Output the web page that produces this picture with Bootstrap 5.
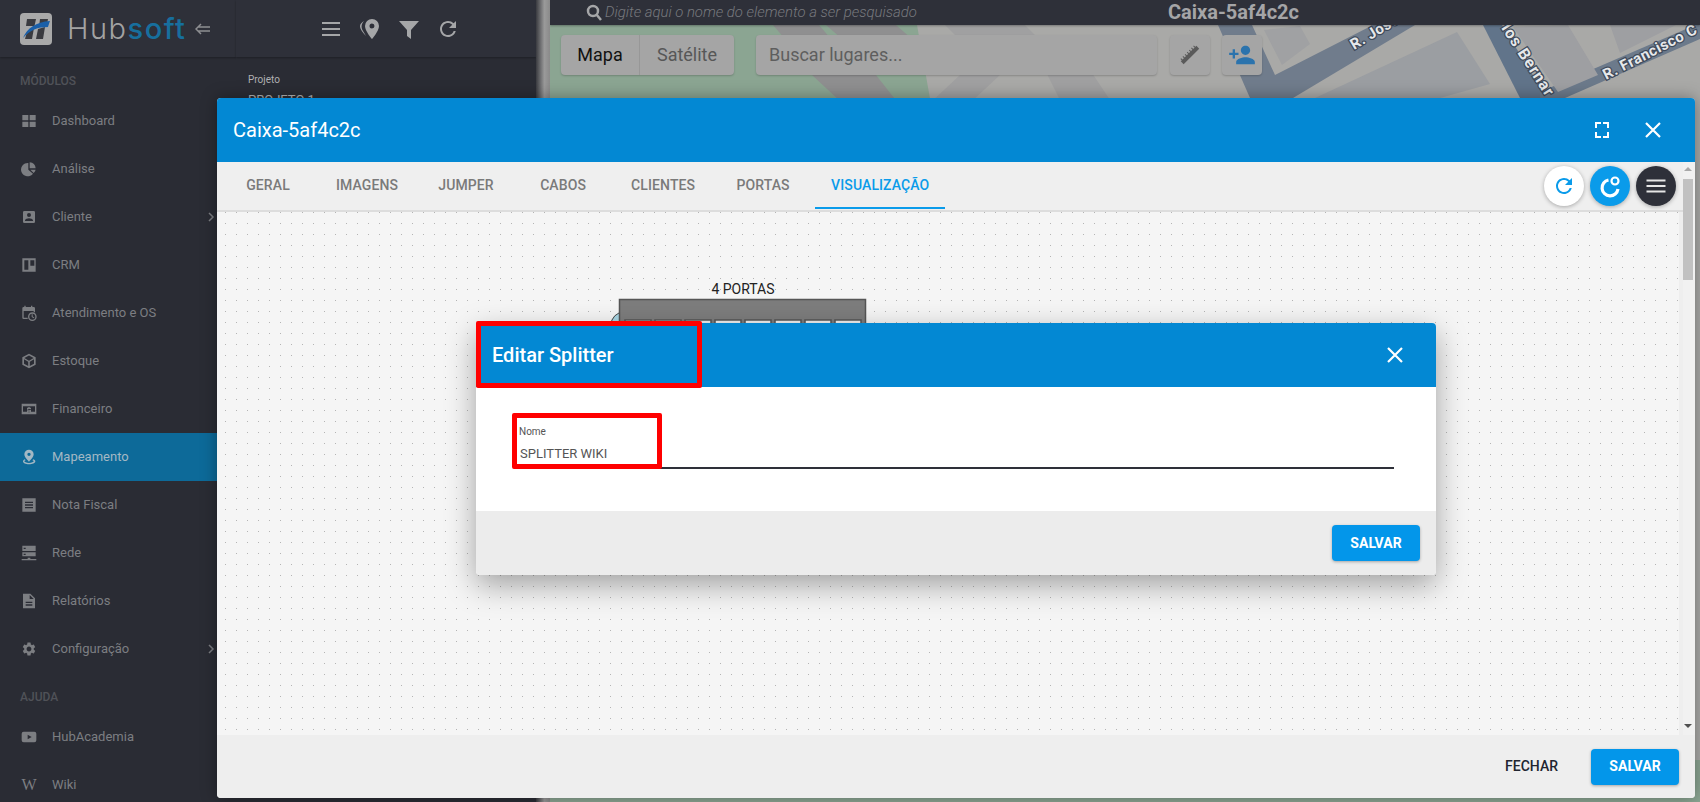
<!DOCTYPE html>
<html lang="pt-BR">

<head>
    <meta charset="UTF-8">
    <meta name="viewport" content="width=device-width, initial-scale=1.0">
    <title>Hubsoft - Mapeamento</title>
    <link href="https://cdn.jsdelivr.net/npm/bootstrap@5.3.0/dist/css/bootstrap.min.css" rel="stylesheet">
    <style>
        html, body { height: 100%; overflow: hidden; }
        body { font-family: Roboto, "Liberation Sans", sans-serif; background: #2a2c34; position: relative; }

        /* menu lateral */
        .side-menu { width: 236px; background: #2a2c34; flex: none; height: 802px; }
        .brand-bar { height: 57px; background: #2e3039; padding-left: 20px; box-shadow: 0 1px 2px rgba(0,0,0,.3); }
        .brand-name { font-family: Inter, sans-serif; font-weight: 300; font-size: 29px; letter-spacing: 1.5px; line-height: 1; color: #a3a3a3; margin-left: 15px; }
        .brand-name span { color: #176f9e; font-weight: 500; }
        .brand-back { margin-left: 9px; flex: none; }
        .menu-title { font-size: 12px; font-weight: 500; color: #505258; padding-left: 20px; height: 16px; line-height: 16px; }
        .menu-link { height: 48px; padding-left: 21px; font-size: 13px; color: #7c7e82; position: relative; }
        .menu-link svg { width: 16px; height: 16px; fill: #7c7e82; flex: none; margin-right: 15px; }
        .menu-link.is-on { background: #0d6a99; color: #a3b8c4; }
        .menu-link.is-on svg { fill: #a3b8c4; }
        .menu-link svg.menu-arrow { position: absolute; left: 207px; top: 19px; width: 8px; height: 10px; margin: 0; fill: none; }
        .wiki-mark { font-family: "Liberation Serif", serif; font-weight: 400; font-size: 16px; width: 16px; margin-right: 15px; text-align: center; color: #7c7e82; }

        /* painel do projeto */
        .project-panel { width: 300px; background: #2a2c34; flex: none; height: 802px; }
        .panel-bar { height: 57px; background: #2e3039; box-shadow: 0 1px 2px rgba(0,0,0,.3); padding-left: 83px; gap: 15px; }
        .panel-bar svg { width: 24px; height: 24px; fill: #a5a6a8; }
        .panel-label { font-size: 10px; color: #b0b1b3; padding: 16px 0 0 12px; line-height: 14px; }
        .panel-value { font-size: 13px; color: #b0b1b3; padding: 3px 0 0 12px; }

        /* mapa */
        .map-gutter { width: 14px; flex: none; height: 802px; background: linear-gradient(90deg, #3a3b40, #9a9a9a 60%, #8a8a8a); }
        .map-area { flex-grow: 1; height: 802px; position: relative; background: #a8a8a6; overflow: hidden; }
        .map-canvas { position: absolute; left: 0; top: 25px; }
        .map-bar { height: 25px; background: #2e3039; position: relative; padding-left: 36px; box-shadow: 0 1px 2px rgba(0,0,0,.3); }
        .map-search { width: 583px; font-size: 14.9px; font-style: italic; font-weight: 300; color: #77797e; }
        .map-search svg { width: 17px; height: 17px; margin-right: 2px; }
        .map-title { font-size: 20px; font-weight: 700; color: #a5a5a7; line-height: 25px; margin-left: -1px; }
        .map-tools { position: relative; padding: 10px 0 0 11px; }
        .map-switch, .map-find, .map-tool { background: #a5a5a5; height: 40px; border-radius: 4px; box-shadow: 0 1px 2px rgba(0,0,0,.2); }
        .map-switch { width: 173px; font-size: 18px; margin-right: 22px; }
        .map-switch div { line-height: 40px; text-align: center; }
        .map-switch .sw-a { width: 79px; color: #111; border-right: 1px solid #979797; }
        .map-switch .sw-b { flex-grow: 1; color: #575757; }
        .map-find { width: 401px; font-size: 18px; line-height: 40px; color: #5e5e5e; padding-left: 13px; margin-right: 13px; }
        .map-tool { width: 40px; margin-right: 12px; }
        .map-tool svg { width: 28px; height: 28px; }

        /* modal Caixa */
        .box-dialog { position: absolute; left: 217px; top: 98px; width: 1478px; height: 700px; background: #eee; border: 0; border-radius: 4px; box-shadow: 0 0 16px rgba(0,0,0,.35); overflow: hidden; }
        .blue-head { background: #0388d3; color: #fff; height: 64px; border: 0; border-radius: 0; padding: 0 16px; flex: none; }
        .blue-head h5 { font-size: 20px; font-weight: 400; margin: 0; }
        .box-dialog .blue-head { padding-right: 30px; }
        .head-btn { width: 24px; height: 24px; display: block; }
        .head-gap { margin-right: 27px; }
        .box-main { flex: 1 1 auto; min-height: 0; }
        .box-left { flex-grow: 1; min-width: 0; }
        .tab-strip { height: 50px; background: #efefef; border-bottom: 2px solid #ddd; padding: 0 7px 0 6px; flex: none; }
        .tab-item { min-width: 90px; height: 47px; padding: 0 16px 0; margin-right: 7px; font-size: 14px; font-weight: 500; letter-spacing: .1px; line-height: 46px; text-align: center; color: #7a7a7a; text-transform: uppercase; border-bottom: 2px solid transparent; }
        .tab-item.is-on { color: #0a9bea; border-bottom-color: #0a9bea; }
        .round-btn { width: 40px; height: 40px; border-radius: 50%; box-shadow: 0 1px 4px rgba(0,0,0,.3); margin-left: 6px; }
        .round-btn svg { width: 24px; height: 24px; }
        .round-blue { background: #0a9bea; }
        .round-dark { background: #2e3039; }
        .round-group { height: 47px; }
        .dot-canvas { flex-grow: 1; margin-right: 4px; position: relative; background-color: #f5f5f5; background-image: radial-gradient(circle, #b4b4b4 .6px, transparent 1px); background-size: 11px 11px; background-position: 3px 6px; }
        .device-art { position: absolute; left: 390px; top: 64px; }
        .scroll-rail { width: 12px; flex: none; background: #f1f1f1; position: relative; }
        .scroll-thumb { position: absolute; left: 0; top: 17px; width: 10px; height: 101px; background: #c1c1c1; }
        .scroll-up, .scroll-down { position: absolute; left: 1px; width: 0; height: 0; border-left: 4px solid transparent; border-right: 4px solid transparent; }
        .scroll-up { top: 5px; border-bottom: 4px solid #a8a8a8; }
        .scroll-down { bottom: 7px; border-top: 4px solid #505050; }
        .gray-foot { height: 63px; background: #eee; border: 0; border-radius: 0; padding: 0 16px; flex: none; }
        .link-btn { font-size: 14px; font-weight: 500; color: #212530; margin-right: 33px; }
        .save-btn { width: 88px; height: 36px; padding: 0; background: #0396ea; border: 0; border-radius: 4px; color: #fff; font-size: 14px; font-weight: 700; box-shadow: 0 1px 3px rgba(0,0,0,.3); }

        /* modal Splitter */
        .split-dialog { position: absolute; left: 476px; top: 323px; width: 960px; height: 252px; background: #fff; border: 0; border-radius: 4px; box-shadow: 0 10px 30px rgba(0,0,0,.35); overflow: hidden; }
        .split-dialog .blue-head h5 { font-size: 20px; font-weight: 500; }
        .split-close { margin-right: 13px; }
        .split-body { height: 124px; padding: 39px 42px 0 38px; flex: none; }
        .split-label { display: block; font-size: 10px; color: #555; margin: 0 0 0 5px; line-height: 12px; }
        .split-input { border: 0; border-bottom: 2px solid #2e3039; border-radius: 0; padding: 5px 5px 4px 6px; height: 31px; font-size: 13px; color: #555; background: transparent; }
        .split-foot { flex-grow: 1; background: #ececec; border: 0; border-radius: 0; padding: 0 16px; }
        .red-mark { position: absolute; border: 5px solid #f00; border-radius: 2px; }
        .mark-title { left: 476px; top: 321px; width: 226px; height: 67px; }
        .mark-name { left: 512px; top: 413px; width: 150px; height: 56px; }
        .menu-title-first { margin-top: 16px; }
        .menu-title-help { margin-top: 16px; }
        .menu-list-help { margin-top: 8px; }
    </style>
</head>

<body>

    <div class="d-flex">
        <!-- Menu lateral -->
        <aside class="side-menu">
            <div class="brand-bar d-flex align-items-center">
                <svg width="32" height="32" viewBox="0 0 32 32" class="flex-none">
                    <rect width="32" height="32" rx="4" fill="#a9a9a9"/>
                    <path d="M7 6h9l-1.500 7H6zM20 6h8l-1 5-8 3zM5 26l2-7 7-4-2 11zM18 16l7-2-2 12h-7z" fill="#3a3b40"/>
                    <path d="M3 25C7 15 16 9 30 8c-1 2.500-1.500 4.500-2 6-10 0-18 3-25 11z" fill="#1a5fa8"/>
                </svg>
                <div class="brand-name">Hub<span>soft</span></div>
                <svg class="brand-back" width="16" height="12" viewBox="0 0 16 12" fill="none" stroke="#8d8e91" stroke-width="1.500"><path d="M6 1 1 6l5 5M3 4h12M3 8h12"/></svg>
            </div>
            <div class="menu-title menu-title-first">MÓDULOS</div>
            <div class="mt-2" id="menu-a"></div>
            <div class="menu-title menu-title-help">AJUDA</div>
            <div class="menu-list-help" id="menu-b"></div>
        </aside>

        <!-- Painel do projeto -->
        <section class="project-panel">
            <div class="panel-bar d-flex align-items-center">
                <svg viewBox="0 0 24 24"><path d="M3 5h18v2H3zM3 11h18v2H3zM3 17h18v2H3z"/></svg>
                <svg viewBox="0 0 24 24"><path fill-rule="evenodd" d="M14 2a7 7 0 0 1 7 7c0 5-7 13-7 13S7 14 7 9a7 7 0 0 1 7-7zm0 4.500a2.500 2.500 0 1 0 0 5 2.500 2.500 0 0 0 0-5z"/><path d="M6 4C3 7 3 11 5 14l3 5c-3-3-6-7-6-10 0-2 2-4 4-5z"/></svg>
                <svg viewBox="0 0 24 24"><path d="M2 4h20l-8 9v9l-4-3v-6z"/></svg>
                <svg viewBox="0 0 24 24"><path d="M17.650 6.350A7.958 7.958 0 0 0 12 4c-4.420 0-7.990 3.580-7.990 8s3.570 8 7.990 8c3.730 0 6.840-2.550 7.730-6h-2.080A5.990 5.990 0 0 1 12 18c-3.310 0-6-2.690-6-6s2.690-6 6-6c1.660 0 3.140.690 4.220 1.780L13 11h7V4l-2.350 2.350z"/></svg>
            </div>
            <div class="panel-label">Projeto</div>
            <div class="panel-value">PROJETO 1</div>
        </section>

        <div class="map-gutter"></div>

        <!-- Mapa -->
        <main class="map-area">
            <svg class="map-canvas" width="1150" height="777" viewBox="550 25 1150 777">
                <rect x="550" y="25" width="1150" height="777" fill="#a9a9a7"/>
                <path d="M550 25H917L932 110H550z M550 760H1700V802H550z" fill="#8ba592"/>
                <path d="M773 25h46l12 14h-46zM826 25h70l16 14h-70zM812 75l38-2 30 28h-40zM848 75h28l22 28h-28z" fill="#8f8f90"/>
                <path d="M945 25h80l14 14h-80zM960 75h40l-30 28h-40zM1040 60l30-20 40 60h-50z" fill="#a0a0a1"/>
                <path d="M1264 30l36-4 10 18-28 21z" fill="#a0a1a3"/>
                <path d="M1315 98 1457 32l33 52-50 14z" fill="#9b9ea2"/>
                <path d="M1218 25h34l23 50 98-50h42L1293 98h-43z" fill="#707c8c"/>
                <path d="M1483 25h19l45 73h-27z" fill="#61748a"/>
                <path d="M1540 92 1700 23v16l-135 59h-25z" fill="#6c7a8b"/>
                <path d="M1513 27l55-2 30 50-40 17zM1610 25l70-2-60 30z" fill="#9e9fa2"/>
                <g font-family="Roboto, sans-serif" font-weight="700" font-size="15" fill="#e6e8ea" stroke="#3f4a5a" stroke-width="2.500" paint-order="stroke" letter-spacing=".5">
                    <text transform="translate(1354 50) rotate(-31)">R. José</text>
                    <text transform="translate(1501 28) rotate(57)" font-size="16" letter-spacing="1">los Bernar</text>
                    <text transform="translate(1606 80) rotate(-27)">R. Francisco C</text>
                </g>
            </svg>
            <div class="map-bar d-flex align-items-center">
                <div class="map-search d-flex align-items-center">
                    <svg viewBox="0 0 17 17" fill="none" stroke="#a5a6a8" stroke-width="2.500"><circle cx="7" cy="7" r="5"/><path d="M10.500 10.500 15 16"/></svg>
                    Digite aqui o nome do elemento a ser pesquisado
                </div>
                <div class="map-title">Caixa-5af4c2c</div>
            </div>
            <div class="map-tools d-flex">
                <div class="map-switch d-flex"><div class="sw-a">Mapa</div><div class="sw-b">Satélite</div></div>
                <div class="map-find">Buscar lugares...</div>
                <div class="map-tool d-flex align-items-center justify-content-center">
                    <svg viewBox="0 0 28 28"><g transform="rotate(-45 14 14)"><rect x="3" y="12" width="22" height="4" fill="#5a5a5a"/><path d="M5 10v3M8 10v3M11 10v3M14 10v3M17 10v3M20 10v3M23 10v3" stroke="#5a5a5a" stroke-width="1"/></g></svg>
                </div>
                <div class="map-tool d-flex align-items-center justify-content-center">
                    <svg viewBox="0 0 24 24" fill="#2b73ad"><path d="M15 12c2.210 0 4-1.790 4-4s-1.790-4-4-4-4 1.790-4 4 1.790 4 4 4zm-9-2V7H4v3H1v2h3v3h2v-3h3v-2H6zm9 4c-2.670 0-8 1.340-8 4v2h16v-2c0-2.660-5.330-4-8-4z"/></svg>
                </div>
            </div>
        </main>
    </div>

    <!-- Modal Caixa -->
    <div class="modal-content box-dialog d-flex flex-column">
        <div class="modal-header blue-head d-flex align-items-center">
            <h5>Caixa-5af4c2c</h5>
            <div class="ms-auto d-flex align-items-center">
                <svg class="head-btn head-gap" viewBox="0 0 24 24" fill="none" stroke="#fff" stroke-width="2"><path d="M6 10V5h5M13 5h5v5M18 14v5h-5M11 19H6v-5"/></svg>
                <svg class="head-btn" viewBox="0 0 24 24" fill="none" stroke="#fff" stroke-width="2.200"><path d="M5 5l14 14M19 5 5 19"/></svg>
            </div>
        </div>
        <div class="box-main d-flex">
            <div class="box-left d-flex flex-column">
                <div class="tab-strip d-flex align-items-start">
                    <div class="tab-item">Geral</div>
                    <div class="tab-item">Imagens</div>
                    <div class="tab-item">Jumper</div>
                    <div class="tab-item">Cabos</div>
                    <div class="tab-item">Clientes</div>
                    <div class="tab-item">Portas</div>
                    <div class="tab-item is-on">Visualização</div>
                    <div class="round-group ms-auto d-flex align-items-center">
                        <div class="round-btn bg-white d-flex align-items-center justify-content-center">
                            <svg viewBox="0 0 24 24" fill="#0a9bea"><path d="M17.650 6.350A7.958 7.958 0 0 0 12 4c-4.420 0-7.990 3.580-7.990 8s3.570 8 7.990 8c3.730 0 6.840-2.550 7.730-6h-2.080A5.990 5.990 0 0 1 12 18c-3.310 0-6-2.690-6-6s2.690-6 6-6c1.660 0 3.140.690 4.220 1.780L13 11h7V4l-2.350 2.350z"/></svg>
                        </div>
                        <div class="round-btn round-blue d-flex align-items-center justify-content-center">
                            <svg viewBox="0 0 24 24" fill="none" stroke="#fff"><path d="M10.500 6A8 8 0 1 0 20 15" stroke-width="3.200"/><circle cx="17" cy="7" r="3.500" stroke-width="2.200"/></svg>
                        </div>
                        <div class="round-btn round-dark d-flex align-items-center justify-content-center">
                            <svg viewBox="0 0 24 24" fill="none" stroke="#e6e6e6" stroke-width="1.800"><path d="M2.500 6.500h19M2.500 12h19M2.500 17.500h19"/></svg>
                        </div>
                    </div>
                </div>
                <div class="dot-canvas">
                    <svg class="device-art" width="290" height="70" viewBox="0 0 290 70">
                        <text x="136" y="18" text-anchor="middle" font-family="Roboto, sans-serif" font-size="14" fill="#222">4 PORTAS</text>
                        <circle cx="17" cy="49" r="13" fill="#a9d6e4" stroke="#444" stroke-width="1"/>
                        <rect x="12.500" y="23.500" width="246" height="46" fill="#7d7d7d" stroke="#555" stroke-width="1.500"/>
                        <g fill="#f0f0f0" stroke="#555" stroke-width="1.500">
                            <rect x="18" y="44" width="26" height="20"/><rect x="48" y="44" width="26" height="20"/>
                            <rect x="78" y="44" width="26" height="20"/><rect x="108" y="44" width="26" height="20"/>
                            <rect x="138" y="44" width="26" height="20"/><rect x="168" y="44" width="26" height="20"/>
                            <rect x="198" y="44" width="26" height="20"/><rect x="228" y="44" width="26" height="20"/>
                        </g>
                    </svg>
                </div>
            </div>
            <div class="scroll-rail">
                <div class="scroll-up"></div>
                <div class="scroll-thumb"></div>
                <div class="scroll-down"></div>
            </div>
        </div>
        <div class="modal-footer gray-foot d-flex align-items-center justify-content-end">
            <span class="link-btn">FECHAR</span>
            <button type="button" class="btn save-btn">SALVAR</button>
        </div>
    </div>

    <!-- Modal Editar Splitter -->
    <div class="modal-content split-dialog d-flex flex-column">
        <div class="modal-header blue-head d-flex align-items-center">
            <h5>Editar Splitter</h5>
            <svg class="head-btn split-close ms-auto" viewBox="0 0 24 24" fill="none" stroke="#fff" stroke-width="2.200"><path d="M5 5l14 14M19 5 5 19"/></svg>
        </div>
        <div class="modal-body split-body">
            <label class="split-label" for="nome">Nome</label>
            <input id="nome" class="form-control split-input" type="text" value="SPLITTER WIKI">
        </div>
        <div class="modal-footer split-foot d-flex align-items-center justify-content-end">
            <button type="button" class="btn save-btn">SALVAR</button>
        </div>
    </div>

    <div class="red-mark mark-title"></div>
    <div class="red-mark mark-name"></div>

    <script src="https://cdn.jsdelivr.net/npm/bootstrap@5.3.0/dist/js/bootstrap.bundle.min.js"></script>
    <script>
        // icones do menu
        const icons = {
            dash: '<path d="M2 3h9v8H2zM13 3h9v8h-9zM2 13h9v8H2zM13 13h9v8h-9z"/>',
            pie: '<path d="M11 3v10l7 6a10 10 0 1 1-7-16zM13 2a10 10 0 0 1 9 9h-9zM14 13h8a10 10 0 0 1-3 5z"/>',
            client: '<path d="M3 5v14a2 2 0 0 0 2 2h14a2 2 0 0 0 2-2V5a2 2 0 0 0-2-2H5a2 2 0 0 0-2 2zm12 4a3 3 0 1 1-6 0 3 3 0 0 1 6 0zm-9 8c0-2 4-3.100 6-3.100s6 1.100 6 3.100v1H6v-1z"/>',
            crm: '<path fill-rule="evenodd" d="M2 2h20v20H2zM5 5v14h6V5zM14 5v8h6V5z"/>',
            cal: '<path fill-rule="evenodd" d="M5 1h2v2h8V1h2v2h2a2 2 0 0 1 2 2v6h-2V9H4v10h6v2H4a2 2 0 0 1-2-2V5a2 2 0 0 1 2-2h1z"/><path fill-rule="evenodd" d="M17 11a6.500 6.500 0 1 1 0 13 6.500 6.500 0 0 1 0-13zm0 2a4.500 4.500 0 1 0 0 9 4.500 4.500 0 0 0 0-9zm-1 1h1.500v3.300l2.500 1.400-.8 1.200-3.200-1.900z"/>',
            box: '<path fill-rule="evenodd" d="M12 1l10 5.500v11L12 23 2 17.500v-11zM5 7.500l7 4 7-4-7-3.800zM4.500 9.500v6.600l6.300 3.500v-6.500zM19.500 9.500l-6.300 3.600v6.500l6.300-3.500z"/>',
            money: '<path fill-rule="evenodd" d="M1 4h22v16H1zM3 8v8h18V8zM11 9h2v1h2v2h-4v1h4v3h-2v1h-2v-1H9v-2h4v-1H9V10h2z"/>',
            pin: '<path fill-rule="evenodd" d="M12 1a7 7 0 0 1 7 7c0 4.500-7 11-7 11S5 12.500 5 8a7 7 0 0 1 7-7zm0 4.500a2.500 2.500 0 1 0 0 5 2.500 2.500 0 0 0 0-5z"/><path d="M5.500 15.500l1.500 1.300C5.500 17.400 5 18 5 18.500c0 1 3 2.500 7 2.500s7-1.500 7-2.500c0-.5-.5-1.100-2-1.700l1.500-1.300c2 1 3 2 3 3 0 3-4.500 4.500-9.500 4.500S3 21.500 3 18.500c0-1 1-2 2.500-3z"/>',
            note: '<path fill-rule="evenodd" d="M2 2h20v20H2zM6 7v2h12V7zM6 11v2h12v-2zM6 15v2h12v-2z"/>',
            net: '<path fill-rule="evenodd" d="M2 1h20v8H2zM4 4v2h3V4zM2 11h20v6H2zM4 13v2h3v-2z"/><path d="M1 21h9v-2h4v2h9v2H1z"/>',
            file: '<path fill-rule="evenodd" d="M3 1h11l7 7v15H3zM13 3v6h6zM7 13v2h10v-2zM7 17v2h10v-2z"/>',
            gear: '<path d="M19.140 12.940c.040-.3.060-.610.060-.940 0-.320-.020-.640-.070-.940l2.030-1.580a.490.490 0 0 0 .120-.610l-1.920-3.320a.488.488 0 0 0-.590-.220l-2.390.960c-.5-.380-1.030-.7-1.620-.940l-.360-2.540a.484.484 0 0 0-.480-.410h-3.840c-.240 0-.430.170-.470.410l-.360 2.540c-.590.240-1.130.570-1.620.940l-2.390-.960c-.220-.080-.470 0-.590.220L2.740 8.870c-.120.210-.080.470.120.610l2.030 1.580c-.050.3-.090.630-.090.940s.020.640.070.940l-2.030 1.580a.490.490 0 0 0-.120.610l1.920 3.320c.120.220.370.290.590.220l2.390-.960c.5.380 1.030.7 1.620.940l.36 2.540c.05.240.24.41.48.41h3.840c.24 0 .44-.17.47-.41l.36-2.540c.59-.24 1.13-.56 1.62-.94l2.39.96c.22.08.47 0 .59-.22l1.92-3.32c.12-.22.07-.47-.12-.61l-2.010-1.580zM12 15.600c-1.980 0-3.600-1.620-3.600-3.600s1.620-3.600 3.600-3.600 3.600 1.620 3.600 3.600-1.620 3.600-3.600 3.600z"/>',
            play: '<path fill-rule="evenodd" d="M4 4h16a3 3 0 0 1 3 3v10a3 3 0 0 1-3 3H4a3 3 0 0 1-3-3V7a3 3 0 0 1 3-3zm6 4.500v7l6-3.500z"/>'
        };
        const arrow = '<svg class="menu-arrow" viewBox="0 0 8 10"><path d="M2 1l4 4-4 4" stroke="#7c7e82" stroke-width="1.500" fill="none"/></svg>';

        function row(item) {
            const cls = item.on ? " is-on" : "";
            const mark = item.icon ? `<svg viewBox="0 0 24 24">${icons[item.icon]}</svg>` : `<span class="wiki-mark">W</span>`;
            return `<div class="menu-link d-flex align-items-center${cls}">${mark}${item.text}${item.more ? arrow : ""}</div>`;
        }

        document.getElementById("menu-a").innerHTML = [
            { text: "Dashboard", icon: "dash" },
            { text: "Análise", icon: "pie" },
            { text: "Cliente", icon: "client", more: true },
            { text: "CRM", icon: "crm" },
            { text: "Atendimento e OS", icon: "cal" },
            { text: "Estoque", icon: "box" },
            { text: "Financeiro", icon: "money" },
            { text: "Mapeamento", icon: "pin", on: true },
            { text: "Nota Fiscal", icon: "note" },
            { text: "Rede", icon: "net" },
            { text: "Relatórios", icon: "file" },
            { text: "Configuração", icon: "gear", more: true }
        ].map(row).join("");

        document.getElementById("menu-b").innerHTML = [
            { text: "HubAcademia", icon: "play" },
            { text: "Wiki" }
        ].map(row).join("");
    </script>

</body>

</html>
